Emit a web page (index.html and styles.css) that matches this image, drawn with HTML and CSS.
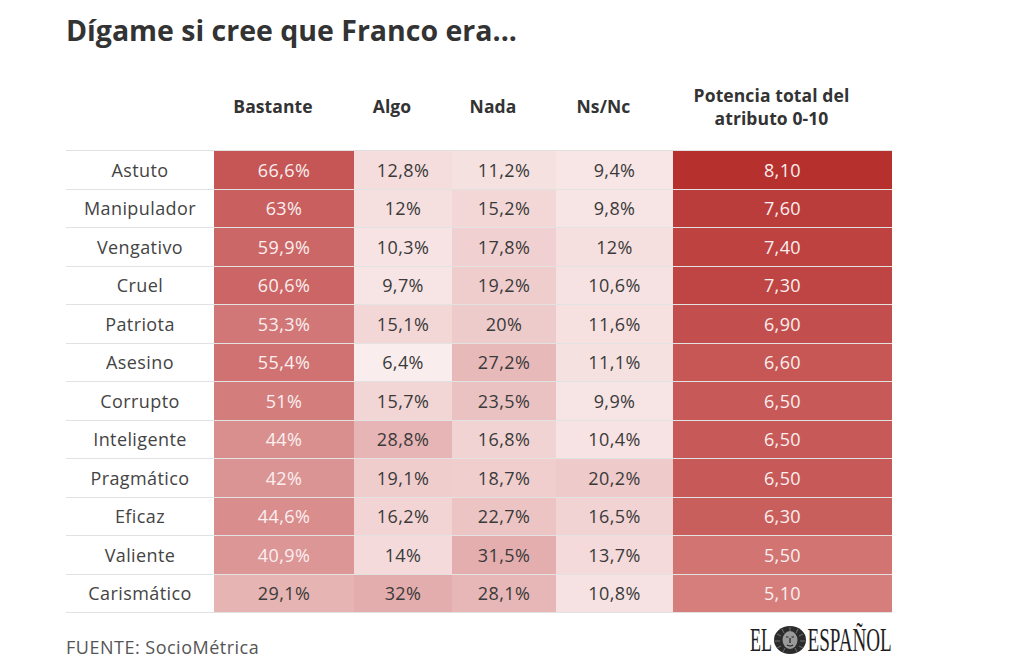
FILE: index.html
```html
<!DOCTYPE html>
<html lang="es">
<head>
<meta charset="utf-8">
<title>Dígame si cree que Franco era...</title>
<link rel="stylesheet" href="styles.css">
</head>
<body>
<div class="page">
  <h1 class="title">Dígame si cree que Franco era...</h1>
  <table class="heat">
    <colgroup>
      <col class="c-lbl"><col class="c-bas"><col class="c-alg"><col class="c-nad"><col class="c-ns"><col class="c-pot">
    </colgroup>
    <thead>
      <tr>
        <th></th>
        <th>Bastante</th>
        <th>Algo</th>
        <th>Nada</th>
        <th>Ns/Nc</th>
        <th>Potencia total del<br>atributo 0-10</th>
      </tr>
    </thead>
    <tbody>
      <tr><td class="lbl">Astuto</td><td class="pct hi" style="--v:66.6">66,6%</td><td class="pct" style="--v:12.8">12,8%</td><td class="pct" style="--v:11.2">11,2%</td><td class="pct" style="--v:9.4">9,4%</td><td class="pot" style="--p:8.1">8,10</td></tr>
      <tr><td class="lbl">Manipulador</td><td class="pct hi" style="--v:63">63%</td><td class="pct" style="--v:12">12%</td><td class="pct" style="--v:15.2">15,2%</td><td class="pct" style="--v:9.8">9,8%</td><td class="pot" style="--p:7.6">7,60</td></tr>
      <tr><td class="lbl">Vengativo</td><td class="pct hi" style="--v:59.9">59,9%</td><td class="pct" style="--v:10.3">10,3%</td><td class="pct" style="--v:17.8">17,8%</td><td class="pct" style="--v:12">12%</td><td class="pot" style="--p:7.4">7,40</td></tr>
      <tr><td class="lbl">Cruel</td><td class="pct hi" style="--v:60.6">60,6%</td><td class="pct" style="--v:9.7">9,7%</td><td class="pct" style="--v:19.2">19,2%</td><td class="pct" style="--v:10.6">10,6%</td><td class="pot" style="--p:7.3">7,30</td></tr>
      <tr><td class="lbl">Patriota</td><td class="pct hi" style="--v:53.3">53,3%</td><td class="pct" style="--v:15.1">15,1%</td><td class="pct" style="--v:20">20%</td><td class="pct" style="--v:11.6">11,6%</td><td class="pot" style="--p:6.9">6,90</td></tr>
      <tr><td class="lbl">Asesino</td><td class="pct hi" style="--v:55.4">55,4%</td><td class="pct" style="--v:6.4">6,4%</td><td class="pct" style="--v:27.2">27,2%</td><td class="pct" style="--v:11.1">11,1%</td><td class="pot" style="--p:6.6">6,60</td></tr>
      <tr><td class="lbl">Corrupto</td><td class="pct hi" style="--v:51">51%</td><td class="pct" style="--v:15.7">15,7%</td><td class="pct" style="--v:23.5">23,5%</td><td class="pct" style="--v:9.9">9,9%</td><td class="pot" style="--p:6.5">6,50</td></tr>
      <tr><td class="lbl">Inteligente</td><td class="pct hi" style="--v:44">44%</td><td class="pct" style="--v:28.8">28,8%</td><td class="pct" style="--v:16.8">16,8%</td><td class="pct" style="--v:10.4">10,4%</td><td class="pot" style="--p:6.5">6,50</td></tr>
      <tr><td class="lbl">Pragmático</td><td class="pct hi" style="--v:42">42%</td><td class="pct" style="--v:19.1">19,1%</td><td class="pct" style="--v:18.7">18,7%</td><td class="pct" style="--v:20.2">20,2%</td><td class="pot" style="--p:6.5">6,50</td></tr>
      <tr><td class="lbl">Eficaz</td><td class="pct hi" style="--v:44.6">44,6%</td><td class="pct" style="--v:16.2">16,2%</td><td class="pct" style="--v:22.7">22,7%</td><td class="pct" style="--v:16.5">16,5%</td><td class="pot" style="--p:6.3">6,30</td></tr>
      <tr><td class="lbl">Valiente</td><td class="pct hi" style="--v:40.9">40,9%</td><td class="pct" style="--v:14">14%</td><td class="pct" style="--v:31.5">31,5%</td><td class="pct" style="--v:13.7">13,7%</td><td class="pot" style="--p:5.5">5,50</td></tr>
      <tr><td class="lbl">Carismático</td><td class="pct" style="--v:29.1">29,1%</td><td class="pct" style="--v:32">32%</td><td class="pct" style="--v:28.1">28,1%</td><td class="pct" style="--v:10.8">10,8%</td><td class="pot" style="--p:5.1">5,10</td></tr>
    </tbody>
  </table>
  <footer class="foot">
    <span class="src">FUENTE: SocioMétrica</span>
    <div class="logo">
      <svg class="logo-el" width="24" height="36" viewBox="0 0 44 36" preserveAspectRatio="none"><text x="2" y="29">EL</text></svg>
      <svg class="lion" width="34" height="30" viewBox="0 0 34 30" aria-hidden="true">
        <ellipse cx="17" cy="15" rx="16" ry="14" fill="#2b2b2b"/>
        <g stroke="#808080" stroke-width="0.8">
          <path d="M17 2 L17 6 M9 4 L11 8 M25 4 L23 8 M4 9 L8 11 M30 9 L26 11 M2 16 L7 16 M32 16 L27 16 M4 23 L8 21 M30 23 L26 21 M10 27 L12 23 M24 27 L22 23"/>
        </g>
        <ellipse cx="17" cy="15" rx="7.5" ry="9" fill="#9a9a9a"/>
        <path d="M13 12 h2.5 M18.5 12 h2.5 M17 13 v5 M14 20 q3 2 6 0" stroke="#222" stroke-width="1.2" fill="none"/>
      </svg>
      <svg class="logo-es" width="88" height="36" viewBox="0 0 152 36" preserveAspectRatio="none"><text x="1" y="29">ESPAÑOL</text></svg>
    </div>
  </footer>
</div>
</body>
</html>
```
FILE: styles.css
```css
html, body {
  margin: 0;
  padding: 0;
  background: #ffffff;
}

body {
  font-family: "Open Sans", "Noto Sans", sans-serif;
  color: #333333;
}

.page {
  width: 826px;
  padding: 0 0 0 66px;
}

.title {
  margin: 0;
  padding-top: 11px;
  font-size: 28.5px;
  line-height: 38px;
  font-weight: 700;
  color: #333333;
}

.heat {
  margin-top: 14px;
  width: 826px;
  border-collapse: collapse;
  table-layout: fixed;
  font-size: 18px;
  letter-spacing: 0.4px;
}

.c-lbl { width: 148px; }
.c-bas { width: 140px; }
.c-alg { width: 98px; }
.c-nad { width: 104px; }
.c-ns { width: 117px; }
.c-pot { width: 219px; }

.heat th {
  height: 87px;
  padding: 0 22px 0 0;
  font-weight: 700;
  font-size: 17.5px;
  letter-spacing: 0.1px;
  line-height: 23px;
  color: #333333;
  text-align: center;
  vertical-align: middle;
  border-bottom: 1px solid #e0e0e0;
}

.heat td {
  height: 37.5px;
  padding: 0;
  text-align: center;
  vertical-align: middle;
  border-bottom: 1px solid #e2e2e2;
  color: #3a3a3a;
}

.heat td.lbl {
  color: #444444;
}

.heat td.pct {
  background: color-mix(in srgb, #c65555 calc((var(--v) - 3) * 1.5625%), #fdf5f5);
}

.heat td.pot {
  background: color-mix(in srgb, #b6302e calc((var(--p) - 5.1) * 33.3%), #d57e7c);
  color: #fbefef;
}

.heat td.hi {
  color: #fbefef;
}

.foot {
  display: flex;
  align-items: center;
  justify-content: space-between;
  margin-top: 8px;
}

.src {
  font-size: 18px;
  letter-spacing: 0.5px;
  color: #555555;
  padding-top: 14px;
}

.logo {
  display: flex;
  align-items: center;
  gap: 0;
  margin-right: -3px;
}

.logo svg {
  display: block;
}

.logo text {
  font-family: "Liberation Serif", "Times New Roman", serif;
  font-size: 33px;
  fill: #1e1e1e;
}
```
